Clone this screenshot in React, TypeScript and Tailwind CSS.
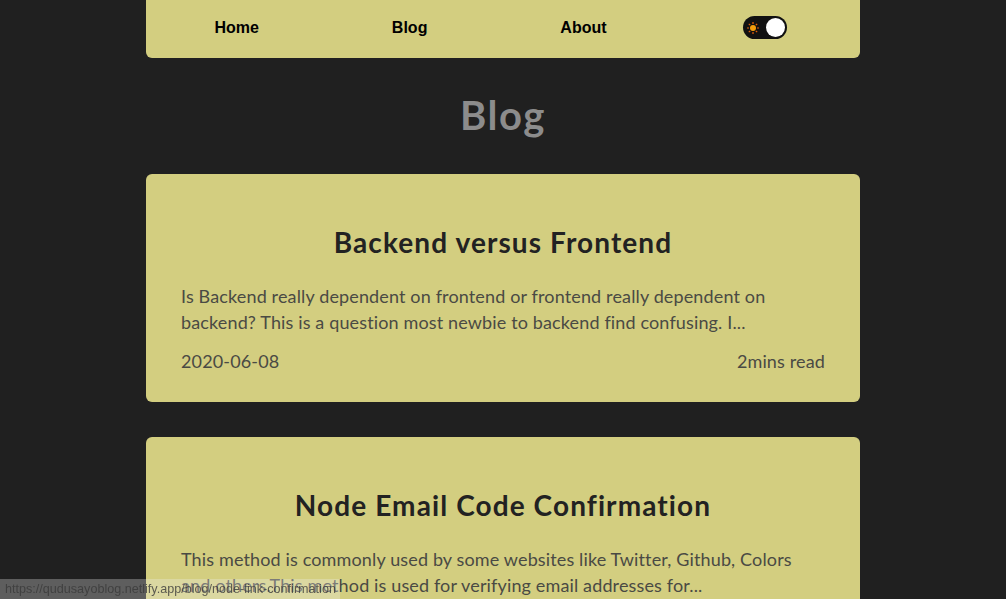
import React from "react";

type Post = { title: string; excerpt: string; date: string; read: string };

const posts: Post[] = [
  {
    title: "Backend versus Frontend",
    excerpt:
      "Is Backend really dependent on frontend or frontend really dependent on backend? This is a question most newbie to backend find confusing. I...",
    date: "2020-06-08",
    read: "2mins read",
  },
  {
    title: "Node Email Code Confirmation",
    excerpt:
      "This method is commonly used by some websites like Twitter, Github, Colors and others.This method is used for verifying email addresses for...",
    date: "2020-06-01",
    read: "3mins read",
  },
];

function Sun() {
  return (
    <svg width="12" height="12" viewBox="0 0 12 12">
      <circle cx="6" cy="6" r="3" fill="#f59e0b" />
      <g stroke="#e8600a" strokeWidth="1.2">
        <line x1="6" y1="0" x2="6" y2="2" />
        <line x1="6" y1="10" x2="6" y2="12" />
        <line x1="0" y1="6" x2="2" y2="6" />
        <line x1="10" y1="6" x2="12" y2="6" />
        <line x1="1.8" y1="1.8" x2="3.2" y2="3.2" />
        <line x1="8.8" y1="8.8" x2="10.2" y2="10.2" />
        <line x1="1.8" y1="10.2" x2="3.2" y2="8.8" />
        <line x1="8.8" y1="3.2" x2="10.2" y2="1.8" />
      </g>
    </svg>
  );
}

export default function App() {
  return (
    <div className="min-h-screen bg-[#202020] font-['Lato','Noto_Sans',sans-serif]">
      <div className="mx-auto w-[714px]">
        <nav className="h-[58px] bg-[#d3ce80] rounded-b-md flex items-center justify-around pl-[2px] pr-[6px] pb-[3px] text-[16px] font-bold text-black font-['Liberation_Sans',sans-serif]">
          <a>Home</a>
          <a>Blog</a>
          <a>About</a>
          <button className="ml-[4px] w-[44px] h-[23px] rounded-full bg-[#111] flex items-center justify-between pl-[4px] pr-[2px]">
            <Sun />
            <span className="w-[19px] h-[19px] rounded-full bg-white" />
          </button>
        </nav>

        <h1 className="text-center text-[40px] font-bold tracking-[1.5px] text-[#8c8c8c] pt-[31px] pb-[33px] leading-[52px]">
          Blog
        </h1>

        <div className="flex flex-col gap-[35px]">
          {posts.map((p) => (
            <article key={p.title} className="bg-[#d3ce80] rounded-md px-[35px] pt-[50px] pb-[28px]">
              <h2 className="text-center text-[28px] font-bold tracking-[1.1px] text-[#222] leading-[36px]">{p.title}</h2>
              <p className="mt-[23px] text-[18px] tracking-[0.14px] leading-[26px] text-[#4a4a44]">{p.excerpt}</p>
              <div className="mt-[13px] flex justify-between text-[18px] tracking-[0.14px] leading-[26px] text-[#4a4a44]">
                <span>{p.date}</span>
                <span>{p.read}</span>
              </div>
            </article>
          ))}
        </div>
      </div>

      <div className="fixed left-0 bottom-0 w-fit h-[20px] bg-[#f0f0f0]/30 pl-[5px] pr-[4px] text-[12.6px] leading-[20px] text-[#3a3a3a]/80 font-['Liberation_Sans',sans-serif] whitespace-nowrap">
        https://qudusayoblog.netlify.app/blog/node-link-confirmation
      </div>
    </div>
  );
}
